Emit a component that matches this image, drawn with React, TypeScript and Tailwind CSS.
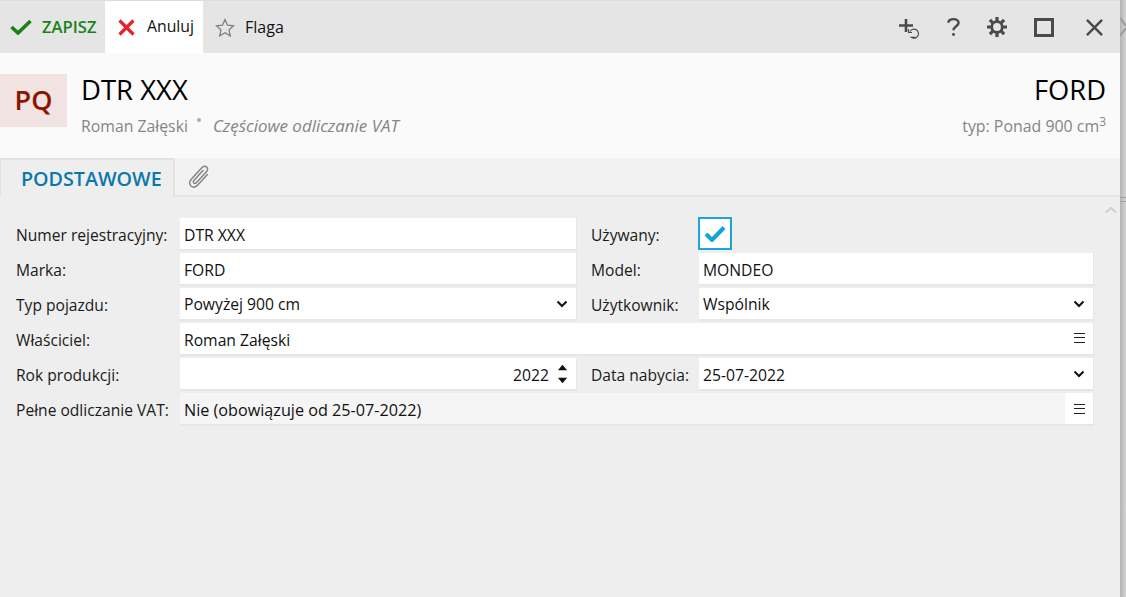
import React from "react";

const font = { fontFamily: '"Open Sans", "Noto Sans", sans-serif' };

function Chevron() {
  return (
    <svg width="12" height="8" viewBox="0 0 12 8" fill="none" stroke="#111" strokeWidth="2" className="-mt-[4px]">
      <path d="M1.5 1.5 6 6l4.5-4.5" />
    </svg>
  );
}

function Burger({ className = "-mt-[6px]" }: { className?: string }) {
  return (
    <svg width="11" height="10" viewBox="0 0 11 10" stroke="#222" strokeWidth="1" className={className}>
      <path d="M0 .5h11M0 4.5h11M0 9.5h11" />
    </svg>
  );
}

function Field({ children, className = "" }: { children?: React.ReactNode; className?: string }) {
  return (
    <div className={"flex h-[33px] items-center border-b-2 border-r border-[#e6e6e6] bg-white pl-[4px] pr-[8px] pt-[5px] pb-[1px] text-[15.7px] text-[#111] whitespace-nowrap " + className}>
      {children}
    </div>
  );
}

function Label({ children }: { children: React.ReactNode }) {
  return <div className="flex h-[33px] items-center pt-[2px] text-[15.6px] text-[#1a1a1a] whitespace-nowrap">{children}</div>;
}

export default function App() {
  return (
    <div style={font} className="flex h-[597px] w-[1126px] overflow-hidden bg-[#ececec]">
      <div className="flex h-full w-[1120px] flex-col">
        <div className="flex h-[53px] items-stretch border-t border-[#dcdcdc] bg-[#e5e5e5]">
          <div className="flex w-[105px] items-center pl-[10px]">
            <svg width="22" height="16" viewBox="0 0 22 16" fill="none" stroke="#178317" strokeWidth="3.6">
              <path d="M1.5 8 8 14 20.5 2" />
            </svg>
            <span className="ml-[10px] text-[16.6px] font-semibold text-[#178317]">ZAPISZ</span>
          </div>
          <div className="flex w-[98px] items-center bg-white pl-[13px]">
            <svg width="17" height="17" viewBox="0 0 17 17" fill="none" stroke="#e3242f" strokeWidth="3.2">
              <path d="M1.5 1.5l14 14M15.5 1.5l-14 14" />
            </svg>
            <span className="ml-[12px] text-[15.8px] text-[#111]">Anuluj</span>
          </div>
          <div className="flex items-center pl-[12px]">
            <svg width="20" height="19" viewBox="0 0 20 19" fill="none" stroke="#808080" strokeWidth="1.3">
              <path d="M10 1.5l2.5 5.7 6 .6-4.500 4.100 1.300 6-5.300-3.100-5.300 3.100 1.300-6L1.500 7.800l6-.6z" />
            </svg>
            <span className="ml-[10px] text-[16px] text-[#111]">Flaga</span>
          </div>
          <div className="ml-auto flex items-center pr-[17px]">
            <svg width="23" height="21" viewBox="0 0 23 21" fill="none" stroke="#4a4a4a" className="mr-[26px] mt-[2px]">
              <path d="M8 1v13M1 7.500h14" strokeWidth="2.600" />
              <path d="M12 13.500a4.500 4.500 0 1 1 1.300 5.800h4" strokeWidth="1.100" />
              <path d="M10.500 11v3.500h3.500" strokeWidth="1.100" />
            </svg>
            <svg width="13" height="20" viewBox="0 0 14 20" fill="none" stroke="#4a4a4a" strokeWidth="2.600" className="mr-[27px]">
              <path d="M1.500 5.500C1.500 3 3.800 1.500 7 1.500s5.500 1.600 5.500 4c0 3.700-5.500 3.600-5.500 8" />
              <circle cx="7" cy="18" r="1.600" fill="#4a4a4a" stroke="none" />
            </svg>
            <svg width="20" height="20" viewBox="0 0 20 20" fill="none" stroke="#4a4a4a" className="mr-[27px]">
              <circle cx="10" cy="10" r="5.300" strokeWidth="2.800" />
              <path d="M10 0v4M10 16v4M0 10h4M16 10h4M2.900 2.900l2.900 2.900M14.200 14.200l2.900 2.900M17.100 2.900l-2.900 2.900M5.800 14.200l-2.900 2.900" strokeWidth="3.200" />
            </svg>
            <div className="mr-[32px] h-[19px] w-[20px] border-[3px] border-[#4a4a4a]" />
            <svg width="17" height="17" viewBox="0 0 18 18" fill="none" stroke="#4a4a4a" strokeWidth="2.600">
              <path d="M1 1l16 16M17 1L1 17" />
            </svg>
          </div>
        </div>

        <div className="flex h-[105px] bg-[#fafafa] pt-[21px]">
          <div className="flex h-[53px] w-[67px] items-center justify-center bg-[#f0e3e1] text-[27px] font-semibold text-[#8f1300]">PQ</div>
          <div className="ml-[14px]">
            <div className="text-[27.500px] leading-[32px] text-black">DTR XXX</div>
            <div className="mt-[10px] flex items-start text-[15.800px] leading-[20px] text-[#858585]">
              <span>Roman Załęski</span>
              <span className="mx-[9px] mt-[2px] h-[4px] w-[4px] rounded-full bg-[#a8b0b8]" />
              <span className="ml-[3px] text-[16.900px] italic">Częściowe odliczanie VAT</span>
            </div>
          </div>
          <div className="ml-auto pr-[14px] text-right">
            <div className="text-[27.300px] leading-[32px] text-black">FORD</div>
            <div className="mt-[10px] text-[15.900px] leading-[20px] text-[#858585]">
              typ: Ponad 900 cm<sup className="text-[12px]">3</sup>
            </div>
          </div>
        </div>

        <div className="flex h-[39px] border-b-2 border-[#e5e5e5] bg-[#f2f2f2]">
          <div className="flex h-[39px] w-[175px] items-center border-l border-r-2 border-t-2 border-[#e2e2e2] bg-[#eeeeee] pl-[20px] text-[19.700px] font-semibold text-[#0b78ac]">
            PODSTAWOWE
          </div>
          <div className="ml-[12px] flex items-center">
            <svg width="24" height="24" viewBox="0 0 24 24" fill="none" stroke="#808080" strokeWidth="1.400" strokeLinecap="round">
              <path d="M20.400 9.500 11 19.800c-2.300 2.500-5 2.900-7 1.200-2-1.800-1.800-4.500.5-7L14.800 2.800c1.600-1.700 3.500-2 4.900-.8 1.400 1.300 1.200 3.200-.4 4.900L9.500 17.500c-.9 1-2 1.100-2.700.5-.7-.7-.6-1.700.3-2.700L16 5.500" />
            </svg>
          </div>
        </div>

        <div className="relative flex-1 bg-[#eeeeee] pl-[16px] pr-[26px] pt-[21px]">
          <svg width="12" height="8" viewBox="0 0 14 8" fill="none" stroke="#d0d0d0" strokeWidth="2.500" className="absolute right-[3px] top-[9px]">
            <path d="M1 7l6-5.500L13 7" />
          </svg>
          <div className="grid grid-cols-[164px_397px_122px_395px] gap-y-[2px]">
            <Label>Numer rejestracyjny:</Label>
            <Field>DTR XXX</Field>
            <div className="pl-[14px]"><Label>Używany:</Label></div>
            <div className="flex h-[33px] items-center">
              <div className="-ml-[1px] -mt-[2px] flex h-[33px] w-[34px] items-center justify-center border-2 border-[#1aa7e0] bg-white">
                <svg width="22" height="17" viewBox="0 0 22 17" fill="none" stroke="#0ea5dc" strokeWidth="4">
                  <path d="M2 9l6 6L20 2.500" />
                </svg>
              </div>
            </div>

            <Label>Marka:</Label>
            <Field>FORD</Field>
            <div className="pl-[14px]"><Label>Model:</Label></div>
            <Field>MONDEO</Field>

            <Label>Typ pojazdu:</Label>
            <Field className="justify-between"><span className="-mt-[2px]">Powyżej 900 cm</span><Chevron /></Field>
            <div className="pl-[14px]"><Label>Użytkownik:</Label></div>
            <Field className="justify-between"><span className="-mt-[2px]">Wspólnik</span><Chevron /></Field>

            <Label>Właściciel:</Label>
            <div className="col-span-3">
              <Field className="justify-between">Roman Załęski<Burger /></Field>
            </div>

            <Label>Rok produkcji:</Label>
            <Field className="justify-end">
              <span>2022</span>
              <svg width="11" height="24" viewBox="0 0 12 24" fill="#111" className="ml-[8px] -mt-[4px]">
                <path d="M6 2l5 6H1zM6 22l-5-6h10z" />
              </svg>
            </Field>
            <div className="pl-[14px]"><Label>Data nabycia:</Label></div>
            <Field className="justify-between">25-07-2022<Chevron /></Field>

            <Label>Pełne odliczanie VAT:</Label>
            <div className="col-span-3">
              <div className="relative flex h-[33px] items-center border-b-2 border-r border-[#e6e6e6] bg-[#f5f5f5] pl-[4px] pt-[5px] pb-[1px] text-[16.200px] text-[#111] whitespace-nowrap">
                <span>Nie (obowiązuje od 25-07-2022)</span>
                <div className="absolute right-0 top-0 flex h-[31px] w-[28px] items-center justify-center bg-white">
                  <Burger className="mt-[1px]" />
                </div>
              </div>
            </div>
          </div>
        </div>
      </div>
      <div className="relative h-full w-[6px] bg-gradient-to-r from-[#b4b4b4] to-[#d4d4d4]">
        <svg width="6" height="20" viewBox="0 0 6 20" fill="none" stroke="#9c9c9c" strokeWidth="2" className="absolute left-0 top-[17px]">
          <path d="M0 1l6 8M0 19l6-8" />
        </svg>
        <div className="absolute left-0 top-[197px] h-[1px] w-full bg-[#9e9e9e]" />
        <div className="absolute left-0 top-[201px] h-[1px] w-full bg-[#9e9e9e]" />
      </div>
    </div>
  );
}
